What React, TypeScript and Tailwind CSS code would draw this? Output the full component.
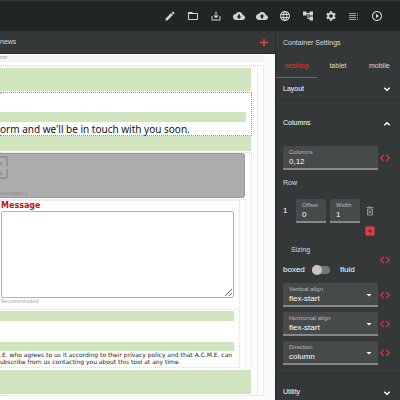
import { useState, type ReactNode } from "react";
import {
  MdAccountTree,
  MdAddBox,
  MdArrowDropDown,
  MdCloudDownload,
  MdCloudUpload,
  MdEdit,
  MdFolderOpen,
  MdLanguage,
  MdOutlineDeleteForever,
  MdPlayCircleOutline,
  MdSaveAlt,
  MdSettings,
} from "react-icons/md";

function LineIcon({ d, width }: { d: string; width: number }) {
  return (
    <svg width="12" height="12" viewBox="0 0 12 12" fill="none" stroke="currentColor" strokeWidth={width}>
      <path d={d} />
    </svg>
  );
}

function ContentsIcon() {
  return (
    <svg width="12" height="12" viewBox="0 0 12 12" fill="currentColor" opacity="0.7">
      <path d="M1 3h7v1H1zM1 5h7v1H1zM1 7h7v1H1zM1 9h7v1H1zM9 3h1v1H9zM9 5h1v1H9zM9 7h1v1H9zM9 9h1v1H9z" />
    </svg>
  );
}

const tools = [
  { label: "Edit", icon: <MdEdit size={12} /> },
  { label: "Open folder", icon: <MdFolderOpen size={12} /> },
  { label: "Save", icon: <MdSaveAlt size={12} /> },
  { label: "Download", icon: <MdCloudDownload size={12} /> },
  { label: "Upload", icon: <MdCloudUpload size={12} /> },
  { label: "Language", icon: <MdLanguage size={12} /> },
  { label: "Structure", icon: <MdAccountTree size={12} /> },
  { label: "Settings", icon: <MdSettings size={12} /> },
  { label: "Contents", icon: <ContentsIcon /> },
  { label: "Play", icon: <MdPlayCircleOutline size={12} /> },
];

function Toolbar() {
  return (
    <header className="flex h-[31px] items-center justify-end gap-[11px] border-t border-[#343a3a] bg-[#202625] pr-[17px] text-[#d2d4d4]">
      {tools.map(({ label, icon }) => (
        <button key={label} type="button" aria-label={label}>
          {icon}
        </button>
      ))}
    </header>
  );
}

function Spacer({ className }: { className: string }) {
  return <div className={`bg-[#d0e5bf] ${className}`} />;
}

function ImagePlaceholder() {
  return (
    <div className="mr-[6px] flex h-[45px] flex-col justify-between rounded-r-[3px] border border-l-0 border-[#999] bg-[#adadad] pt-px text-[#959595]">
      <svg width="8" height="25" viewBox="0 0 8 25" fill="none" stroke="currentColor" strokeWidth="2">
        <path d="M0 2H6Q7 2 7 3V11M7 14V22Q7 23 6 23H0" />
        <path d="M0 7h2v3H0zM0 16l3 4H0z" fill="currentColor" stroke="none" />
      </svg>
      <span className="text-[5px] leading-[8px] font-bold">oImage{"}}"}</span>
    </div>
  );
}

function Canvas() {
  return (
    <main className="flex min-w-0 flex-1 flex-col">
      <div className="flex h-[23px] items-center justify-between border-b border-[#252a2a] bg-[#343839] pr-[5px]">
        <span className="text-[7px] leading-[10px] text-[#dcdddd]">news</span>
        <button type="button" aria-label="Add" className="text-[#f03a3e]">
          <LineIcon d="M6 3V10M2 6.5H10" width={1.5} />
        </button>
      </div>
      <div className="flex flex-1 bg-[#f9f9f9] pr-[11px] font-['DejaVu_Sans','Verdana',sans-serif]">
        <div className="flex flex-1 flex-col bg-white">
          <div className="mt-px mb-[3px] h-[7px] bg-[#f5f5f5] text-[4px] leading-[5px] text-[#999]">ERE</div>
          <div className="border-y border-r border-dotted border-[#ddd] pr-[5px]">
            <div className="border-t border-r border-dotted border-[#e2e2e2] pt-px pr-[5px] pb-px">
              <Spacer className="mr-px h-[23px]" />
              <section className="mt-px border border-l-0 border-dotted border-[#ff6468] pt-[19px]">
                <Spacer className="mr-[5px] h-[10px]" />
                <p className="pt-px font-['Noto_Sans','Verdana',sans-serif] text-[10px] leading-[12px] whitespace-nowrap text-[#111]">
                  orm and we'll be in touch with you soon.
                </p>
              </section>
              <Spacer className="mr-px h-[15px]" />
              <section className="mt-px border-t border-r border-dotted border-[#ddd]">
                <ImagePlaceholder />
                <div className="mt-px mr-[5px] border-t border-r border-dotted border-[#ddd] pr-[5px]">
                  <div className="border-y border-r border-dotted border-[#ddd] pr-[5px] pb-[5px]">
                    <label htmlFor="message" className="block pl-px text-[8px] leading-[10px] font-bold text-[#c41010]">
                      Message
                    </label>
                    <textarea
                      id="message"
                      className="ml-px block h-[87px] w-[calc(100%-1px)] resize-y rounded-[2px] border border-[#b5b5b5] bg-white p-1 text-[8px] text-[#222]"
                    />
                    <p className="pl-px text-[5px] leading-[6px] text-[#999]">Recommended</p>
                  </div>
                  <div className="border-r border-b border-dotted border-[#ddd] pt-px pr-[5px] pb-[2px]">
                    <Spacer className="h-[10px]" />
                    <Spacer className="mt-[21px] h-[9px]" />
                    <p className="text-[6px] leading-[7px] whitespace-nowrap text-[#222]">
                      .E. who agrees to us it according to their privacy policy and that A.C.M.E. can
                      <br />
                      ubscribe from us contacting you about this tool at any time.
                    </p>
                  </div>
                </div>
              </section>
              <Spacer className="mt-[2px] mr-px h-[24px]" />
            </div>
          </div>
        </div>
      </div>
    </main>
  );
}

function CodeButton({ label }: { label: string }) {
  return (
    <button type="button" aria-label={`${label} code`} className="text-[#e53035]">
      <LineIcon d="M4.7 3L1.7 6L4.7 9M7.3 3L10.3 6L7.3 9" width={1.2} />
    </button>
  );
}

const fieldBox =
  "relative flex h-[24px] flex-col rounded-t-[2px] border-b-2 border-[#868989] bg-[#464a4b] pt-[3px]";

function TextField({ id, label, value, className }: { id: string; label: string; value: string; className: string }) {
  return (
    <div className={`${fieldBox} ${className}`}>
      <label htmlFor={id} className="text-[6px] leading-[7px] text-[#b9bbbb]">
        {label}
      </label>
      <input id={id} defaultValue={value} className="h-[11px] w-full bg-transparent text-[8px] leading-[11px] text-white outline-none" />
    </div>
  );
}

function SelectField({ id, label, options }: { id: string; label: string; options: string[] }) {
  return (
    <div className="flex items-center gap-px">
      <div className={`${fieldBox} flex-1 px-[6px]`}>
        <label htmlFor={id} className="text-[6px] leading-[7px] text-[#b9bbbb]">
          {label}
        </label>
        <select id={id} className="h-[11px] w-full appearance-none bg-transparent text-[8px] leading-[11px] text-white outline-none">
          {options.map((option) => (
            <option key={option}>{option}</option>
          ))}
        </select>
        <MdArrowDropDown size={12} className="pointer-events-none absolute top-[6px] right-[3px] text-white" />
      </div>
      <CodeButton label={label} />
    </div>
  );
}

function SectionHeader({ open, className, children }: { open?: boolean; className: string; children: ReactNode }) {
  return (
    <button
      type="button"
      aria-expanded={!!open}
      className={`flex w-full items-center justify-between px-[7px] text-[7px] font-medium text-white ${className}`}
    >
      {children}
      <LineIcon d={open ? "M3.3 7.3L6 4.7L8.7 7.3" : "M3.3 4.7L6 7.3L8.7 4.7"} width={1.4} />
    </button>
  );
}

function SettingsPanel() {
  const [tab, setTab] = useState("desktop");
  return (
    <aside className="w-[125px] shrink-0 border-l border-[#272c2c] bg-[#343839] text-[#dcdddd]">
      <h2 className="pt-[7px] pl-[7px] text-[7px] leading-[10px]">Container Settings</h2>
      <div role="tablist" className="mt-[7px] grid grid-cols-3">
        {["desktop", "tablet", "mobile"].map((name) => (
          <button
            key={name}
            type="button"
            role="tab"
            aria-selected={tab === name}
            onClick={() => setTab(name)}
            className={`h-[23px] border-b text-[7px] ${tab === name ? "border-[#e53035] text-[#e53035]" : "border-transparent"}`}
          >
            {name}
          </button>
        ))}
      </div>
      <SectionHeader className="h-[23px] border-b border-[#2a2e2f]">Layout</SectionHeader>
      <SectionHeader open className="h-[45px]">
        Columns
      </SectionHeader>
      <div className="pr-[9px] pl-[7px]">
        <div className="flex items-center gap-px">
          <TextField id="columns" label="Columns" value="0,12" className="flex-1 px-[6px]" />
          <CodeButton label="Columns" />
        </div>
        <h3 className="mt-2 text-[7px] leading-[10px]">Row</h3>
        <div className="mt-[11px] flex items-center pr-[15px]">
          <span className="w-[13px] text-[8px] text-white">1</span>
          <TextField id="offset" label="Offset" value="0" className="mr-[4px] w-[30px] px-[6px]" />
          <TextField id="width" label="Width" value="1" className="w-[30px] px-[6px]" />
          <button type="button" aria-label="Delete row" className="ml-auto text-[#8e9191]">
            <MdOutlineDeleteForever size={12} />
          </button>
        </div>
        <div className="flex justify-end pt-[2px] pr-[15px]">
          <button type="button" aria-label="Add row" className="text-[#f03a3e]">
            <MdAddBox size={12} />
          </button>
        </div>
        <div className="mt-2 flex items-center justify-between">
          <div>
            <h3 className="pl-2 text-[7px] leading-[10px]">Sizing</h3>
            <label className="mt-[10px] flex h-[10px] items-center text-[8px] leading-[10px] text-white">
              <span className="w-[29px]">boxed</span>
              <input type="checkbox" role="switch" className="peer sr-only" />
              <span className="flex h-[8px] w-[18px] items-center rounded-full bg-[#747777] peer-checked:justify-end">
                <span className="size-[10px] shrink-0 rounded-full bg-[#c6c6c6]" />
              </span>
              <span className="ml-[10px]">fluid</span>
            </label>
          </div>
          <CodeButton label="Sizing" />
        </div>
        <div className="mt-2 flex flex-col gap-[5px]">
          <SelectField id="vertical" label="Vertical align" options={["flex-start", "center", "flex-end"]} />
          <SelectField id="horizontal" label="Horizontal align" options={["flex-start", "center", "flex-end"]} />
          <SelectField id="direction" label="Direction" options={["column", "row"]} />
        </div>
      </div>
      <SectionHeader className="mt-2 h-[37px] border-t border-[#2a2e2f] pt-px">Utility</SectionHeader>
    </aside>
  );
}

export default function App() {
  return (
    <div className="flex h-screen flex-col overflow-hidden bg-[#343839] font-['Liberation_Sans',Arial,sans-serif]">
      <Toolbar />
      <div className="flex min-h-0 flex-1">
        <Canvas />
        <SettingsPanel />
      </div>
    </div>
  );
}
